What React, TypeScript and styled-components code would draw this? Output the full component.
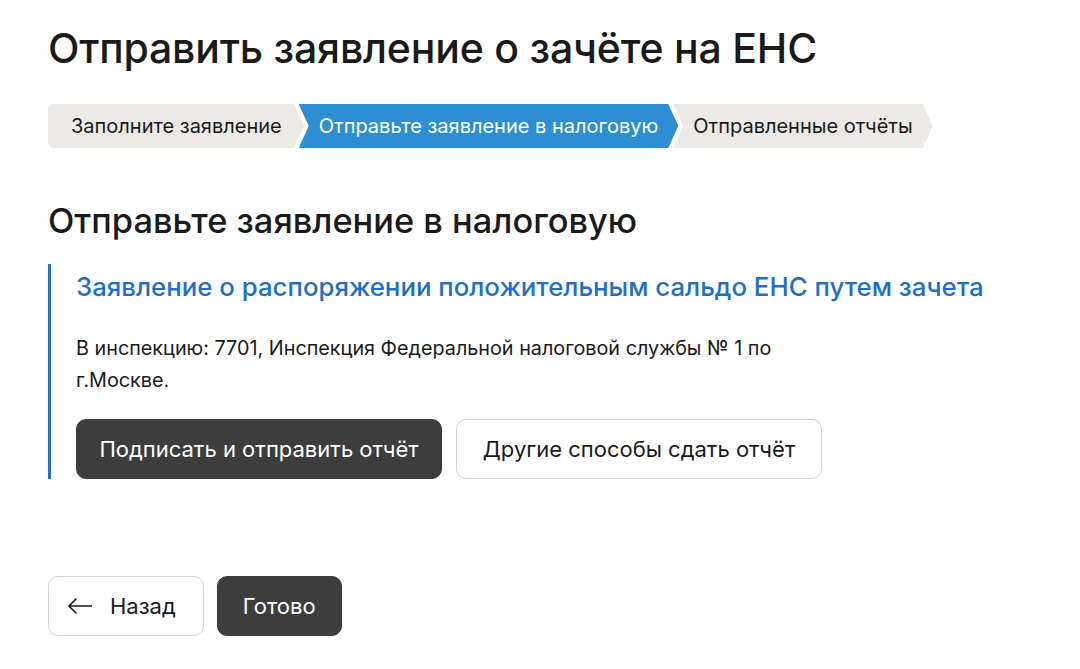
import React from 'react';
import styled, { createGlobalStyle, css } from 'styled-components';

const GlobalStyle = createGlobalStyle`
  body {
    margin: 0;
    background: #fff;
    font-family: Inter, 'Noto Sans', sans-serif;
    color: #1a1a1a;
  }
`;

const steps = ['Заполните заявление', 'Отправьте заявление в налоговую', 'Отправленные отчёты'];

const App: React.FC = () => {
  return (
    <Page>
      <GlobalStyle />
      <Title>Отправить заявление о зачёте на ЕНС</Title>
      <Stepper>
        {steps.map((s, i) => (
          <Step key={s} $first={i === 0} $active={i === 1}>
            {s}
          </Step>
        ))}
      </Stepper>
      <Subtitle>Отправьте заявление в налоговую</Subtitle>
      <Card>
        <CardTitle>Заявление о распоряжении положительным сальдо ЕНС путем зачета</CardTitle>
        <CardText>В инспекцию: 7701, Инспекция Федеральной налоговой службы № 1 по г.Москве.</CardText>
        <ButtonRow>
          <Button $primary $wide>Подписать и отправить отчёт</Button>
          <Button $wide>Другие способы сдать отчёт</Button>
        </ButtonRow>
      </Card>
      <Footer>
        <Button $back>
          <svg width="26" height="18" viewBox="0 0 26 18" fill="none" stroke="#1a1a1a" strokeWidth="1.6">
            <path d="M25 9H2M9.5 1.5L2 9l7.5 7.5" />
          </svg>
          Назад
        </Button>
        <Button $primary>Готово</Button>
      </Footer>
    </Page>
  );
};

export default App;

const Page = styled.div`
  padding: 23px 48px 0;
  display: flex;
  flex-direction: column;
  align-items: flex-start;
`;

const Title = styled.h1`
  margin: 0;
  font-size: 41px;
  font-weight: 500;
  line-height: 50px;
  letter-spacing: -0.2px;
`;

const Stepper = styled.div`
  display: flex;
  margin-top: 31px;
`;

const Step = styled.div<{ $first?: boolean; $active?: boolean }>`
  height: 44px;
  display: flex;
  align-items: center;
  font-size: 20px;
  white-space: nowrap;
  background: ${(p) => (p.$active ? '#2d8fd1' : '#ebeae6')};
  color: ${(p) => (p.$active ? '#fff' : '#1a1a1a')};
  ${(p) =>
    p.$first
      ? css`
          padding: 0 22px 0 23px;
          border-radius: 6px 0 0 6px;
          clip-path: polygon(0 0, calc(100% - 10px) 0, 100% 50%, calc(100% - 10px) 100%, 0 100%);
        `
      : css`
          margin-left: -5px;
          padding: 0 20px 0 20px;
          clip-path: polygon(0 0, calc(100% - 10px) 0, 100% 50%, calc(100% - 10px) 100%, 0 100%, 10px 50%);
        `}
`;

const Subtitle = styled.h2`
  margin: 52px 0 0;
  font-size: 34.4px;
  font-weight: 500;
  line-height: 42px;
`;

const Card = styled.div`
  margin-top: 22px;
  border-left: 3px solid #1f72c6;
  padding: 6px 0 0 25px;
`;

const CardTitle = styled.div`
  font-size: 25.8px;
  font-weight: 500;
  color: #1f6fc4;
  line-height: 34px;
`;

const CardText = styled.p`
  margin: 28px 0 0;
  font-size: 19.8px;
  line-height: 32px;
  max-width: 720px;
`;

const ButtonRow = styled.div`
  display: flex;
  gap: 14px;
  margin-top: 23px;
`;

const Button = styled.button<{ $primary?: boolean; $wide?: boolean; $back?: boolean }>`
  height: 60px;
  display: flex;
  align-items: center;
  justify-content: center;
  gap: 17px;
  padding: 0 ${(p) => (p.$back ? '27px 0 18px' : p.$wide ? '16px' : '25px')};
  ${(p) => p.$wide && 'width: 366px;'}
  white-space: nowrap;
  border-radius: 10px;
  font-family: inherit;
  font-size: 22px;
  cursor: pointer;
  ${(p) =>
    p.$primary
      ? css`
          background: #3d3d3d;
          color: #fff;
          border: 1px solid #3d3d3d;
        `
      : css`
          background: #fff;
          color: #1a1a1a;
          border: 1px solid #d4d4d4;
        `}
`;

const Footer = styled.div`
  display: flex;
  gap: 13px;
  margin-top: 97px;
`;
